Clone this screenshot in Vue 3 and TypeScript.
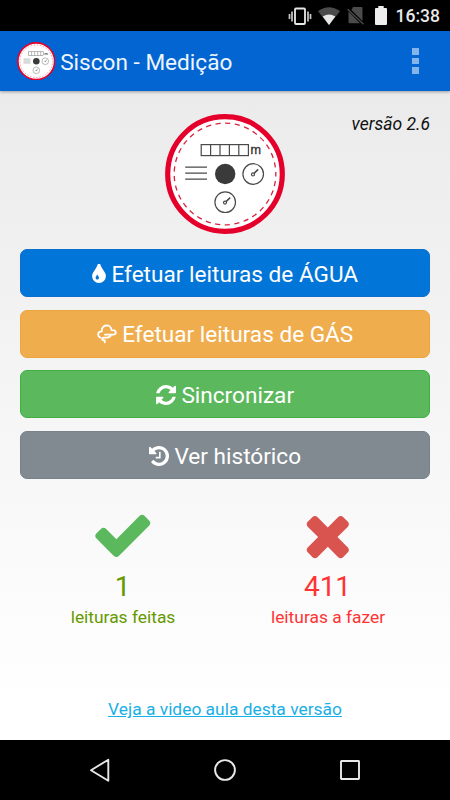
<script setup lang="ts">
interface Action {
  label: string
  kind: string
  viewBox: string
  width: number
  height: number
  path: string
}

interface Counter {
  value: number
  label: string
  kind: string
  path: string
}

const actions: Action[] = [
  {
    label: 'Efetuar leituras de ÁGUA',
    kind: 'water',
    viewBox: '384 128 1024 1408',
    width: 14,
    height: 19,
    path: 'M896 1152q0-36-20-69-1-1-15.500-22.500t-25.500-38-25-44-21-50.500q-4-16-21-16t-21 16q-7 23-21 50.500t-25 44-25.500 38-15.500 22.500q-20 33-20 69 0 53 37.500 90.500t90.500 37.500 90.500-37.500 37.500-90.500zm512-128q0 212-150 362t-362 150-362-150-150-362q0-145 81-275 6-9 62.500-90.500t101-151 99.500-178 83-201.500q9-30 34-47t51-17 51.500 17 33.500 47q28 93 83 201.500t99.500 178 101 151 62.500 90.500q81 127 81 275z',
  },
  {
    label: 'Efetuar leituras de GÁS',
    kind: 'gas',
    viewBox: '0 0 20 20',
    width: 20,
    height: 20,
    path: 'M3.300 13.600C-.2 11.800.6 7.300 4.800 7.300C4.400.1 13.600-.6 14.600 6.200C19.300 6 20.300 9.700 16.700 10.600H8M13.900 10.600C13.600 13 12 13.600 9.500 13.600H7C4.600 13.600 4.600 16.300 7 16.300H7.800V18.300',
  },
  {
    label: 'Sincronizar',
    kind: 'sync',
    viewBox: '128 128 1536 1536',
    width: 20,
    height: 20,
    path: 'M1639 1056q0 5-1 7-64 268-268 434.500t-478 166.500q-146 0-282.500-55t-243.500-157l-129 129q-19 19-45 19t-45-19-19-45v-448q0-26 19-45t45-19h448q26 0 45 19t19 45-19 45l-137 137q71 66 161 102t187 36q134 0 250-65t186-179q11-17 53-117 8-23 30-23h192q13 0 22.500 9.500t9.500 22.500zm25-800v448q0 26-19 45t-45 19h-448q-26 0-45-19t-19-45 19-45l138-138q-148-137-349-137-134 0-250 65t-186 179q-11 17-53 117-8 23-30 23h-199q-13 0-22.500-9.500t-9.500-22.500v-7q65-268 270-434.500t480-166.500q146 0 284 55.500t245 156.500l130-129q19-19 45-19t45 19 19 45z',
  },
  {
    label: 'Ver histórico',
    kind: 'history',
    viewBox: '128 128 1536 1536',
    width: 20,
    height: 20,
    path: 'M1664 896q0 156-61 298t-164 245-245 164-298 61q-172 0-327-72.500t-264-204.500q-7-10-6.500-22.500t8.500-20.500l137-138q10-9 25-9 16 2 23 12 73 95 179 147t225 52q104 0 198.500-40.500t163.500-109.500 109.500-163.500 40.500-198.500-40.500-198.500-109.500-163.500-163.500-109.500-198.500-40.500q-98 0-188 35.500t-160 101.500l137 138q31 30 14 69-17 40-59 40h-448q-26 0-45-19t-19-45v-448q0-42 40-59 39-17 69 14l130 129q107-101 244.500-156.500t284.500-55.500q156 0 298 61t245 164 164 245 61 298zm-640-288v448q0 14-9 23t-23 9h-320q-14 0-23-9t-9-23v-64q0-14 9-23t23-9h224v-352q0-14 9-23t23-9h64q14 0 23 9t9 23z',
  },
]

const counters: Counter[] = [
  {
    value: 1,
    label: 'leituras feitas',
    kind: 'done',
    path: 'M1671 566q0 40-28 68l-724 724-136 136q-28 28-68 28t-68-28l-136-136-362-362q-28-28-28-68t28-68l136-136q28-28 68-28t68 28l294 295 656-657q28-28 68-28t68 28l136 136q28 28 28 68z',
  },
  {
    value: 411,
    label: 'leituras a fazer',
    kind: 'todo',
    path: 'M1490 1322q0 40-28 68l-136 136q-28 28-68 28t-68-28l-294-294-294 294q-28 28-68 28t-68-28l-136-136q-28-28-28-68t28-68l294-294-294-294q-28-28-28-68t28-68l136-136q28-28 68-28t68 28l294 294 294-294q28-28 68-28t68 28l136 136q28 28 28 68t-28 68l-294 294 294 294q28 28 28 68z',
  },
]
</script>

<template>
  <div class="screen">
    <div class="status">
      <svg class="vibrate" viewBox="0 0 24 20">
        <rect x="7" y="2.500" width="10" height="15.500" rx="1" fill="none" stroke="#e8e8e8" stroke-width="1.800" />
        <path d="M1.500 8v5M4 5.500v10M20 5.500v10M22.500 8v5" stroke="#c8c8c8" stroke-width="1.700" />
      </svg>
      <svg class="wifi" viewBox="0 0 22 18">
        <path d="M0 4.300Q11-4 22 4.300L11 18z" fill="#4b4b4b" />
        <path d="M4.700 9.500Q11 5.500 17.300 9.500L11 18z" fill="#e8e8e8" />
      </svg>
      <svg class="sim" viewBox="0 0 18 18">
        <path d="M6 0h8.500q1 0 1 1v13L4.500 3zM1.500 4.500L13 16.200H2.500q-1 0-1-1z" fill="#4b4b4b" />
        <path d="M.7 2.200L16.500 17.300" stroke="#4b4b4b" stroke-width="1.300" />
      </svg>
      <svg class="battery" viewBox="0 0 12 19">
        <path d="M3.300 0h5.400v2h2.300q1 0 1 1v15q0 1-1 1H1q-1 0-1-1V3q0-1 1-1h2.300z" fill="#eee" />
      </svg>
      <span class="clock">16:38</span>
    </div>

    <header class="bar">
      <svg class="bar-logo" viewBox="0 0 120 120"><use href="#meter" /></svg>
      <h1>Siscon - Medição</h1>
      <div class="overflow"><i /><i /><i /></div>
    </header>

    <main>
      <div class="hero">
        <svg class="hero-logo" viewBox="0 0 120 120">
          <g id="meter">
            <circle cx="60" cy="60" r="57.300" fill="#fff" stroke="#e4002b" stroke-width="5.200" />
            <circle cx="60" cy="60" r="50.800" fill="none" stroke="#d8243f" stroke-width="1.300" stroke-dasharray="5.200 4.470" stroke-dashoffset="2.600" />
            <g fill="none" stroke="#4a4a4a" stroke-width="1.200">
              <rect x="36.200" y="30.600" width="47.200" height="11" />
              <path d="M45.600 30.600v11M55 30.600v11M64.400 30.600v11M73.800 30.600v11" />
              <path d="M20.200 53.200h21.800M20.200 59.200h21.800M20.200 65.200h21.800" />
              <circle cx="88.200" cy="60" r="10.300" />
              <circle cx="60.200" cy="88.200" r="10.300" />
              <circle cx="88" cy="60.400" r="1.500" />
              <circle cx="60" cy="88.600" r="1.500" />
              <path d="M89 59.400l4.200-4M61 87.600l4.200-4" stroke-width="1.500" />
            </g>
            <circle cx="60.200" cy="60" r="10.200" fill="#3a3a3a" />
            <text x="85.400" y="39.600" class="unit">m</text>
          </g>
        </svg>
        <span class="version">versão 2.6</span>
      </div>

      <div class="actions">
        <button v-for="a in actions" :key="a.kind" :class="a.kind">
          <svg :width="a.width" :height="a.height" :viewBox="a.viewBox"><path :d="a.path" /></svg>
          <span>{{ a.label }}</span>
        </button>
      </div>

      <div class="counters">
        <div v-for="c in counters" :key="c.kind" class="counter" :class="c.kind">
          <svg viewBox="0 0 1792 1792"><path :d="c.path" /></svg>
          <strong>{{ c.value }}</strong>
          <span>{{ c.label }}</span>
        </div>
      </div>

      <a class="lesson">Veja a video aula desta versão</a>
    </main>

    <nav>
      <svg viewBox="0 0 24 24"><path d="M20.300 1.700v21L3 12.200z" /></svg>
      <svg viewBox="0 0 24 24"><circle cx="12" cy="12" r="9.900" /></svg>
      <svg viewBox="0 0 24 24"><rect x="3" y="3" width="18" height="18" rx=".5" /></svg>
    </nav>
  </div>
</template>

<style>
body {
  margin: 0;
}
</style>

<style scoped>
.screen {
  width: 450px;
  height: 800px;
  display: flex;
  flex-direction: column;
  overflow: hidden;
  font-family: Roboto, sans-serif;
  background: #000;
}
.unit {
  font: 12px Roboto, sans-serif;
  fill: #333;
  stroke: #333;
  stroke-width: 0.3px;
}
.status {
  height: 31px;
  flex: none;
  display: flex;
  align-items: center;
  justify-content: flex-end;
  padding-right: 10px;
  box-sizing: border-box;
}
.vibrate {
  width: 24px;
  height: 20px;
  margin-right: 6px;
}
.wifi {
  width: 22px;
  height: 18px;
  margin-right: 7px;
}
.sim {
  width: 18px;
  height: 18px;
  margin-right: 10px;
}
.battery {
  width: 12px;
  height: 19px;
  margin-right: 9px;
}
.clock {
  color: #e8e8e8;
  font-size: 17.500px;
  font-weight: 500;
  line-height: 31px;
  padding-top: 2px;
}
.bar {
  height: 60px;
  flex: none;
  display: flex;
  align-items: center;
  padding: 0 31px 0 16.500px;
  background: #0265d2;
  box-shadow: 0 1px 3px rgba(0, 0, 0, 0.35);
  z-index: 1;
}
.bar-logo {
  width: 38.500px;
  height: 38.500px;
}
h1 {
  margin: 2px 0 0 5.200px;
  flex: 1;
  font-size: 22.600px;
  font-weight: 400;
  color: #eef5fd;
  white-space: nowrap;
}
.overflow {
  display: grid;
  gap: 3px;
}
.overflow i {
  width: 7px;
  height: 6.500px;
  background: #84b4ea;
}
main {
  height: 649px;
  flex: none;
  display: flex;
  flex-direction: column;
  padding: 22px 20px 0;
  box-sizing: border-box;
  background: linear-gradient(#ebebeb, #fff 95%);
}
.hero {
  display: grid;
  grid-template-columns: 1fr 120px 1fr;
  height: 136px;
}
.hero-logo {
  grid-column: 2;
  width: 120px;
  height: 120px;
  margin-top: 0.700px;
}
.version {
  text-align: right;
  font-size: 17.500px;
  font-style: italic;
  line-height: 22px;
  color: #111;
  white-space: nowrap;
}
.actions {
  display: grid;
  gap: 12.700px;
}
button {
  height: 48px;
  display: flex;
  align-items: center;
  justify-content: center;
  gap: 5.500px;
  padding: 2px 0 0;
  border: 1px solid;
  border-radius: 7px;
  font: 22.600px Roboto, sans-serif;
  color: #fff;
}
button svg {
  fill: #fff;
  margin-top: -1px;
}
.water {
  background: #0275d8;
  border-color: #0b6fce;
}
.gas {
  background: #f0ad4e;
  border-color: #eda53b;
}
.gas svg {
  fill: none;
  stroke: #fff;
  stroke-width: 1.800;
  stroke-linecap: round;
  stroke-linejoin: round;
}
.sync {
  background: #5cb85c;
  border-color: #3fae43;
}
.history {
  background: #818a91;
  border-color: #78828a;
}
.counters {
  display: grid;
  grid-template-columns: 1fr 1fr;
  margin-top: 24px;
  height: 194px;
}
.counter {
  display: flex;
  flex-direction: column;
  align-items: center;
}
.counter svg {
  width: 63.600px;
  height: 63.600px;
}
.counter strong {
  margin-top: 2.400px;
  font-size: 28px;
  font-weight: 400;
  line-height: 36px;
}
.counter span {
  font-size: 17.400px;
  line-height: 24px;
  padding-left: 1px;
}
.done {
  color: #669900;
}
.done svg {
  fill: #5cb85c;
}
.todo {
  color: #ff3333;
}
.todo svg {
  fill: #d9534f;
}
.lesson {
  align-self: center;
  font-size: 17.400px;
  line-height: 24px;
  color: #1aafe6;
  text-decoration: underline;
}
nav {
  height: 60px;
  flex: none;
  display: flex;
  align-items: center;
  justify-content: center;
  gap: 101px;
}
nav svg {
  width: 24px;
  height: 24px;
  fill: none;
  stroke: #e8e8e8;
  stroke-width: 1.900;
  stroke-linejoin: round;
}
</style>
